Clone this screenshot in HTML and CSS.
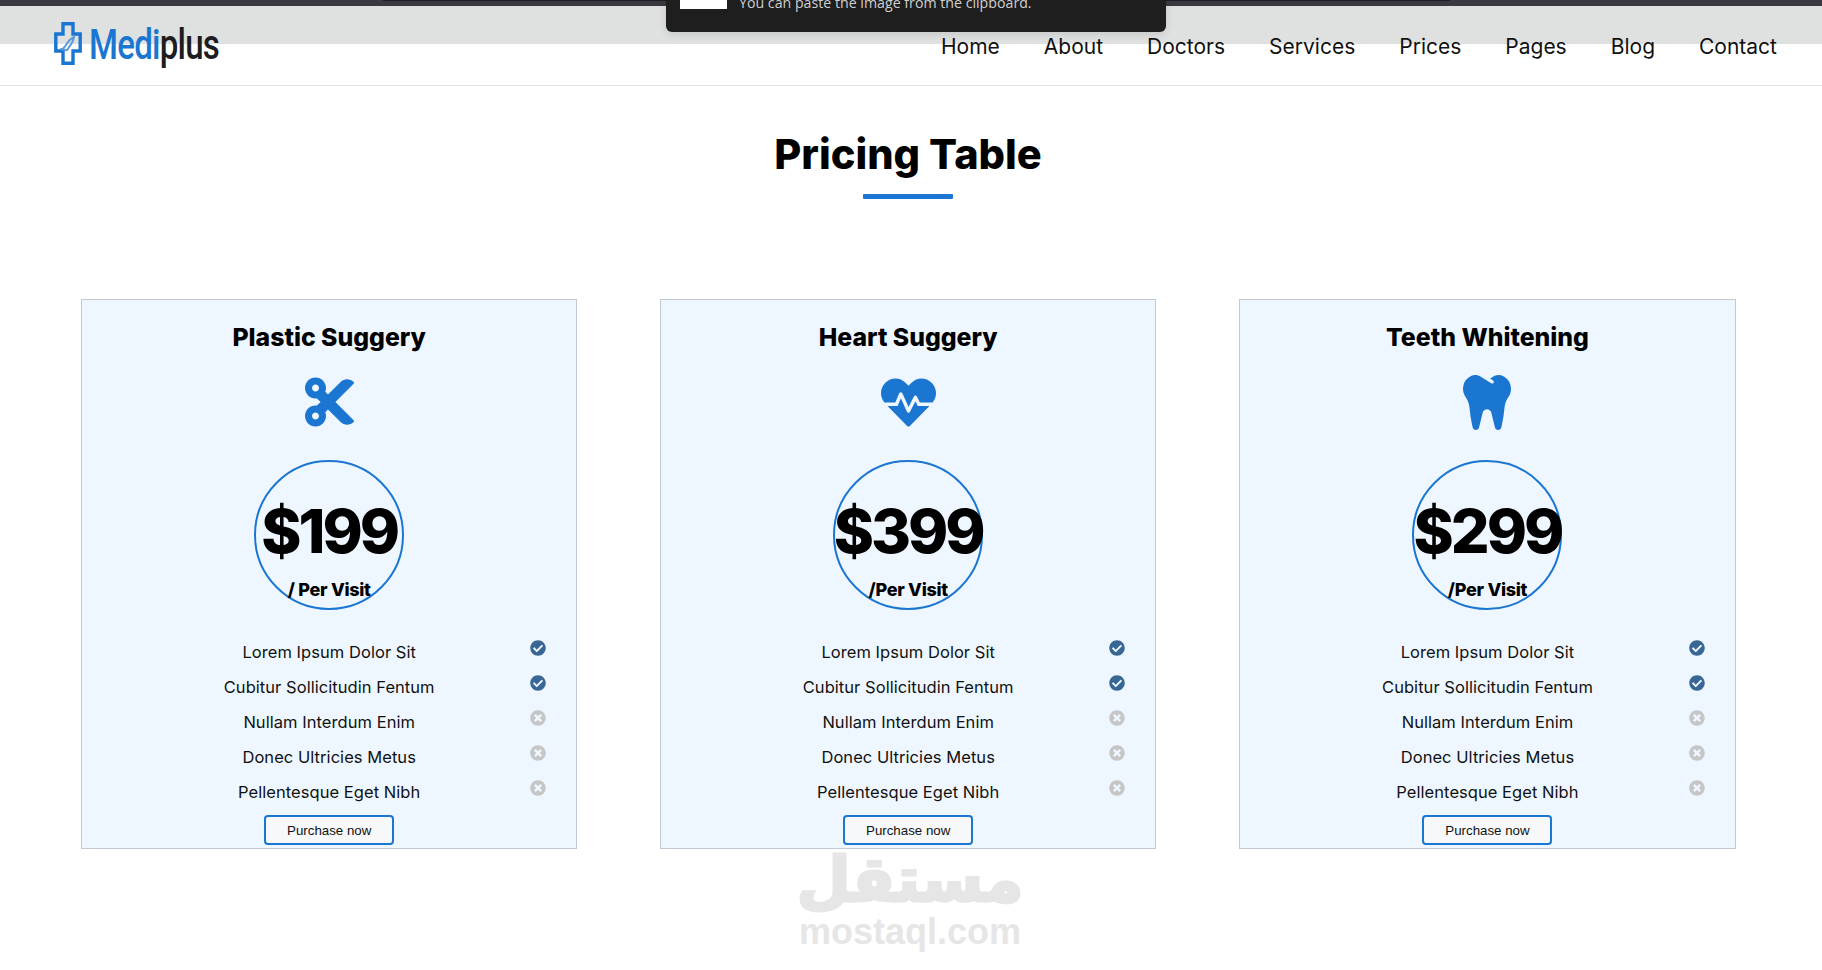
FILE: index.html
```html
<!DOCTYPE html>
<html lang="en">
<head>
<meta charset="utf-8">
<title>Pricing Table</title>
<link rel="stylesheet" href="styles.css">
</head>
<body>
<svg class="defs" width="0" height="0" aria-hidden="true">
  <symbol id="i-cut" viewBox="0 0 448 512"><path d="M278.1 256L444.5 89.6c4.7-4.7 4.7-12.3 0-17-32.8-32.8-86-32.8-118.8 0L210.2 188.1l-24.9-24.9c4.3-10.9 6.7-22.8 6.7-35.3C192 75 149 32 96 32S0 75 0 128s43 96 96 96c4.5 0 9-.3 13.4-.9l32.9 32.9-32.9 32.9c-4.4-.6-8.8-.9-13.4-.9-53 0-96 43-96 96s43 96 96 96 96-43 96-96c0-12.5-2.4-24.3-6.7-35.3l24.9-24.9L325.7 439.4c32.8 32.8 86 32.8 118.8 0 4.7-4.7 4.7-12.3 0-17L278.1 256zM96 160c-17.6 0-32-14.4-32-32s14.4-32 32-32 32 14.4 32 32-14.4 32-32 32zm0 256c-17.6 0-32-14.4-32-32s14.4-32 32-32 32 14.4 32 32-14.4 32-32 32z"/></symbol>
  <symbol id="i-heart" viewBox="0 0 512 512"><path d="M320.2 243.8l-49.7 99.4c-6 12.1-23.4 11.7-28.9-.6l-56.9-126.3-30 71.7H60.6l182.5 186.5c7.1 7.3 18.6 7.3 25.7 0L451.4 288H342.3l-22.1-44.2zM473.7 73.9l-2.4-2.5c-51.5-52.6-135.8-52.6-187.4 0L256 100l-27.9-28.5c-51.5-52.7-135.9-52.7-187.4 0l-2.4 2.4C-10.4 123.7-12.5 203 31 256h102.4l35.9-86.2c5.4-12.9 23.6-13.2 29.4-.4l58.2 129.3 49-97.9c5.9-11.8 22.7-11.8 28.6 0l27.6 55.2H481c43.5-53 41.4-132.3-7.3-182.1z"/></symbol>
  <symbol id="i-tooth" viewBox="0 0 448 512"><path d="M443.98 96.25c-11.01-45.22-47.11-82.06-92.01-93.72-32.19-8.36-63 5.1-89.14 24.33-3.25 2.39-6.96 3.73-10.5 5.48l28.32 18.21c7.42 4.77 9.58 14.67 4.8 22.11-4.46 6.95-14.27 9.86-22.11 4.8L162.83 12.84c-20.7-10.85-43.38-16.4-66.81-10.31-44.9 11.67-81 48.5-92.01 93.72-10.13 41.62-.42 80.81 21.5 110.43 23.36 31.57 32.68 68.66 36.29 107.35 4.4 47.16 10.33 94.16 20.94 140.32l7.8 33.95c3.19 13.87 15.49 23.7 29.67 23.7 13.97 0 26.15-9.55 29.54-23.16l34.47-138.42c4.56-18.32 20.96-31.16 39.76-31.16s35.2 12.85 39.76 31.16l34.47 138.42c3.39 13.61 15.57 23.16 29.54 23.16 14.18 0 26.48-9.83 29.67-23.7l7.8-33.95c10.61-46.15 16.53-93.16 20.94-140.32 3.61-38.7 12.93-75.78 36.29-107.35 21.95-29.61 31.66-68.8 21.53-110.43z"/></symbol>
  <symbol id="i-check" viewBox="0 0 512 512"><path d="M504 256c0 136.967-111.033 248-248 248S8 392.967 8 256 119.033 8 256 8s248 111.033 248 248zM227.314 387.314l184-184c6.248-6.248 6.248-16.379 0-22.627l-22.627-22.627c-6.248-6.249-16.379-6.249-22.628 0L216 308.118l-70.059-70.059c-6.248-6.248-16.379-6.248-22.628 0l-22.627 22.627c-6.248 6.248-6.248 16.379 0 22.627l104 104c6.249 6.249 16.379 6.249 22.628 0z"/></symbol>
  <symbol id="i-times" viewBox="0 0 512 512"><path d="M256 8C119 8 8 119 8 256s111 248 248 248 248-111 248-248S393 8 256 8zm121.6 313.1c4.7 4.7 4.7 12.3 0 17L338 377.6c-4.7 4.7-12.3 4.7-17 0L256 312l-65.1 65.6c-4.7 4.7-12.3 4.7-17 0L134.4 338c-4.7-4.7-4.7-12.3 0-17l65.6-65-65.6-65.1c-4.7-4.7-4.7-12.3 0-17l39.6-39.6c4.7-4.7 12.3-4.7 17 0l65 65.7 65.1-65.6c4.7-4.7 12.3-4.7 17 0l39.6 39.6c4.7 4.7 4.7 12.3 0 17L312 256l65.6 65.1z"/></symbol>
</svg>

<div class="page">
  <header class="header">
    <a class="logo" href="#">
      <svg class="logo-mark" viewBox="0 0 28 43" aria-hidden="true">
        <path d="M9 1.800h10v10.200h7.200v17H19v12.200H9V29H1.800V12H9z" fill="none" stroke="#1a76d1" stroke-width="3.400"/>
        <path d="M8 27c4-1 5-9 12-12-1 7-5 9-6 12-1 2-4 1-6 0z" fill="none" stroke="#5b9bd8" stroke-width="2"/>
      </svg>
      <span class="logo-text"><span class="logo-medi">Medi</span><span class="logo-plus">plus</span></span>
    </a>
    <nav class="nav">
      <a href="#">Home</a><a href="#">About</a><a href="#">Doctors</a><a href="#">Services</a><a href="#">Prices</a><a href="#">Pages</a><a href="#">Blog</a><a href="#">Contact</a>
    </nav>
  </header>

  <main class="pricing">
    <div class="section-title">
      <h2>Pricing Table</h2>
      <span class="title-rule"></span>
    </div>
    <div class="cards">
      <article class="card">
        <h3>Plastic Suggery</h3>
        <div class="card-icon"><svg class="ic-cut"><use href="#i-cut"/></svg></div>
        <div class="price"><span class="amount">$199</span><span class="per">/ Per Visit</span></div>
        <ul class="features">
          <li><span>Lorem Ipsum Dolor Sit</span><svg class="yes"><use href="#i-check"/></svg></li>
          <li><span>Cubitur Sollicitudin Fentum</span><svg class="yes"><use href="#i-check"/></svg></li>
          <li><span>Nullam Interdum Enim</span><svg class="no"><use href="#i-times"/></svg></li>
          <li><span>Donec Ultricies Metus</span><svg class="no"><use href="#i-times"/></svg></li>
          <li><span>Pellentesque Eget Nibh</span><svg class="no"><use href="#i-times"/></svg></li>
        </ul>
        <button class="buy" type="button">Purchase now</button>
      </article>
      <article class="card">
        <h3>Heart Suggery</h3>
        <div class="card-icon"><svg class="ic-heart"><use href="#i-heart"/></svg></div>
        <div class="price"><span class="amount">$399</span><span class="per">/Per Visit</span></div>
        <ul class="features">
          <li><span>Lorem Ipsum Dolor Sit</span><svg class="yes"><use href="#i-check"/></svg></li>
          <li><span>Cubitur Sollicitudin Fentum</span><svg class="yes"><use href="#i-check"/></svg></li>
          <li><span>Nullam Interdum Enim</span><svg class="no"><use href="#i-times"/></svg></li>
          <li><span>Donec Ultricies Metus</span><svg class="no"><use href="#i-times"/></svg></li>
          <li><span>Pellentesque Eget Nibh</span><svg class="no"><use href="#i-times"/></svg></li>
        </ul>
        <button class="buy" type="button">Purchase now</button>
      </article>
      <article class="card">
        <h3>Teeth Whitening</h3>
        <div class="card-icon"><svg class="ic-tooth"><use href="#i-tooth"/></svg></div>
        <div class="price"><span class="amount">$299</span><span class="per">/Per Visit</span></div>
        <ul class="features">
          <li><span>Lorem Ipsum Dolor Sit</span><svg class="yes"><use href="#i-check"/></svg></li>
          <li><span>Cubitur Sollicitudin Fentum</span><svg class="yes"><use href="#i-check"/></svg></li>
          <li><span>Nullam Interdum Enim</span><svg class="no"><use href="#i-times"/></svg></li>
          <li><span>Donec Ultricies Metus</span><svg class="no"><use href="#i-times"/></svg></li>
          <li><span>Pellentesque Eget Nibh</span><svg class="no"><use href="#i-times"/></svg></li>
        </ul>
        <button class="buy" type="button">Purchase now</button>
      </article>
    </div>
  </main>

  <div class="topbar"><span class="topbar-line"></span></div>
  <div class="band"></div>
  <div class="toast">
    <span class="toast-thumb"></span>
    <span class="toast-text">You can paste the image from the clipboard.</span>
  </div>

  <div class="watermark">
    <div class="wm-ar" lang="ar" dir="rtl">مستقل</div>
    <div class="wm-en">mostaql.com</div>
  </div>
</div>
</body>
</html>
```
FILE: styles.css
```css
* { box-sizing: border-box; }
html, body { margin: 0; padding: 0; background: #fff; }
body { font-family: Inter, "Noto Sans", "Liberation Sans", sans-serif; color: #000; }
.defs { position: absolute; }
.page { position: relative; width: 1822px; height: 970px; overflow: hidden; background: #fff; }

.header {
  height: 86px;
  border-bottom: 1px solid #e2e2e2;
  display: flex;
  justify-content: space-between;
  align-items: flex-start;
  padding: 22px 45px 0 54px;
}
.logo { display: flex; gap: 7px; text-decoration: none; position: relative; z-index: 3; }
.logo-mark { width: 28px; height: 43px; }
.logo-text {
  display: block;
  width: 127px;
  font-family: Roboto, sans-serif;
  font-size: 43px;
  font-weight: 500;
  line-height: 44px;
  letter-spacing: -1px;
  transform: scaleX(.77);
  transform-origin: left top;
  white-space: nowrap;
}
.logo-medi { color: #1a76d1; }
.logo-plus { color: #1d1d1f; }
.nav { display: flex; gap: 44px; position: relative; z-index: 3; margin-top: 10px; }
.nav a { color: #111; text-decoration: none; font-size: 21px; line-height: 30px; letter-spacing: 0; }

.pricing { padding-top: 44px; }
.section-title { display: flex; flex-direction: column; align-items: center; height: 169px; padding-right: 6px; }
.section-title h2 { margin: 0; font-size: 41.500px; line-height: 48px; font-weight: 800; letter-spacing: 0; }
.title-rule { width: 90px; height: 5px; margin-top: 16px; background: #1a76d1; border-radius: 1px; }

.cards { display: grid; grid-template-columns: 496.4px 496.4px 497px; gap: 82.6px; padding-left: 81px; }
.card {
  height: 550px;
  background: #eef7ff;
  border: 1px solid #c3c9d2;
  display: flex;
  flex-direction: column;
  align-items: center;
  padding-top: 19px;
}
.card h3 { margin: 0; font-size: 24.800px; line-height: 36px; font-weight: 800; }
.card-icon { height: 64px; margin-top: 15px; display: flex; align-items: center; justify-content: center; }
.card-icon svg { fill: #1a76d1; display: block; }
.ic-cut { width: 49px; height: 56px; }
.ic-heart { width: 55px; height: 55px; }
.ic-tooth { width: 48px; height: 55px; }

.price {
  width: 150px;
  height: 150px;
  margin-top: 26px;
  border: 2px solid #1a76d1;
  border-radius: 50%;
  display: flex;
  flex-direction: column;
  align-items: center;
  white-space: nowrap;
}
.amount { font-size: 61px; line-height: 70px; font-weight: 800; letter-spacing: -3px; margin-top: 34px; }
.per { font-size: 18px; line-height: 24px; font-weight: 800; letter-spacing: -.3px; margin-top: 12px; }

.features {
  list-style: none;
  margin: 25px 0 0;
  padding: 0 30px;
  width: 100%;
}
.features li {
  height: 35px;
  display: grid;
  grid-template-columns: 16px 1fr 16px;
  align-items: center;
  text-align: center;
  font-size: 16.500px;
  letter-spacing: .05px;
  line-height: 35px;
  color: #111;
}
.features li span { grid-column: 2; }
.features li svg { grid-column: 3; width: 16px; height: 16px; align-self: start; margin-top: 5px; }
.yes { fill: #386795; }
.no { fill: #c6c6c6; }

.buy {
  width: 130px;
  height: 30px;
  margin-top: 5px;
  padding: 0;
  background: #f6f8fa;
  border: 2px solid #1a76d1;
  border-radius: 4px;
  font-family: "Liberation Sans", Arial, sans-serif;
  font-size: 13.300px;
  color: #111;
}

.topbar { position: absolute; left: 0; top: 0; width: 100%; height: 6px; background: #3b3940; z-index: 2; }
.topbar-line { position: absolute; left: 383px; top: 0; width: 1067px; height: 1px; background: #1e1e24; }
.band { position: absolute; left: 0; top: 6px; width: 100%; height: 38px; background: #dfe0e0; z-index: 1; }
.toast {
  position: absolute;
  left: 666px;
  top: -10px;
  width: 500px;
  height: 42px;
  background: #1e1e1e;
  border-radius: 0 0 6px 6px;
  box-shadow: 0 2px 8px rgba(0, 0, 0, .12);
  z-index: 4;
}
.toast-thumb { position: absolute; left: 14px; top: 0; width: 47px; height: 19px; background: #fff; }
.toast-text {
  position: absolute;
  left: 73px;
  top: 3px;
  color: #cfcfcf;
  font-family: "Open Sans", sans-serif;
  font-size: 14.200px;
  line-height: 20px;
  white-space: nowrap;
}

.watermark {
  position: absolute;
  left: 790px;
  top: 846px;
  width: 240px;
  text-align: center;
  color: #e6e6e6;
  font-weight: 700;
}
.wm-ar {
  font-family: "DejaVu Sans", sans-serif;
  font-size: 62px;
  line-height: 68px;
  height: 68px;
  -webkit-text-stroke: 3px #e6e6e6;
}
.wm-en { font-family: "Liberation Sans", sans-serif; font-size: 36px; line-height: 36px; }
```
